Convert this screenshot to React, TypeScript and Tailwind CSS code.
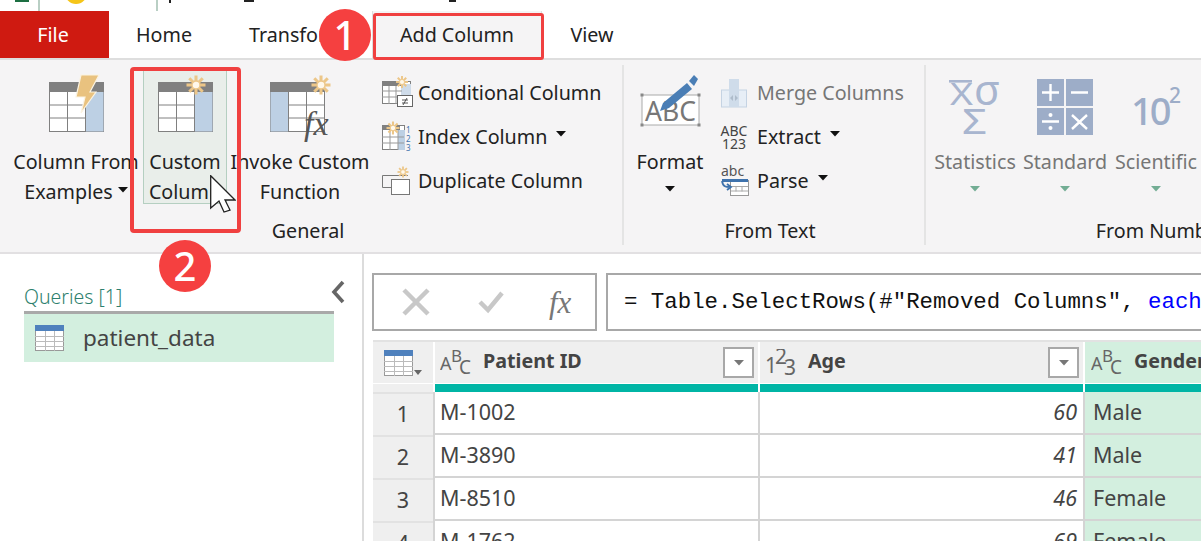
import React from "react";

const Star = ({ x, y, r = 10 }: { x: number; y: number; r?: number }) => (
  <g stroke="#ecc688" strokeWidth={r * 0.32} fill="none">
    {[0, 45, 90, 135].map((a) => {
      const d = (a * Math.PI) / 180;
      return <line key={a} x1={x - r * Math.cos(d)} y1={y - r * Math.sin(d)} x2={x + r * Math.cos(d)} y2={y + r * Math.sin(d)} />;
    })}
    <circle cx={x} cy={y} r={r * 0.42} fill="#fff8ea" stroke="#ecc688" strokeWidth={r * 0.14} />
  </g>
);

const BigTable = ({ blue }: { blue: "left" | "right" }) => (
  <g>
    <rect x="0.5" y="0.5" width="54" height="49" fill="#fff" stroke="#808080" />
    <rect x="0" y="0" width="55" height="10" fill="#808080" />
    {blue === "right" ? <rect x="37" y="10" width="17.5" height="39.5" fill="#bdd0e4" /> : <rect x="0.5" y="10" width="18" height="39.5" fill="#bdd0e4" />}
    <path d={blue === "right" ? "M18.5 10V50M36.5 10V50M0 23H37M0 36H37" : "M18.5 10V50M36.5 10V50M18 23H55M18 36H55"} stroke="#808080" fill="none" />
  </g>
);

const Caret = ({ color = "#111", className = "" }: { color?: string; className?: string }) => (
  <svg width="10" height="6" viewBox="0 0 10 6" className={className}>
    <path d="M0 0H10L5 5.5Z" fill={color} />
  </svg>
);

const IconExamples = () => (
  <svg width="55" height="50" viewBox="0 0 55 50" className="overflow-visible">
    <BigTable blue="right" />
    <path d="M32 -7H50L41 10H47L32 31L36 15H27Z" fill="#e9c27f" stroke="#fbf3e2" strokeWidth="1.2" />
  </svg>
);
const IconCustom = () => (
  <svg width="55" height="50" viewBox="0 0 55 50" className="overflow-visible">
    <BigTable blue="right" />
    <Star x={38} y={3} r={9.5} />
  </svg>
);
const IconInvoke = () => (
  <svg width="60" height="60" viewBox="0 0 60 60" className="overflow-visible">
    <BigTable blue="left" />
    <Star x={51} y={3} r={9.5} />
    <text x="34" y="53" fontFamily="'Liberation Serif', serif" fontStyle="italic" fontSize="34" fill="#555">fx</text>
  </svg>
);

const SmallConditional = () => (
  <svg width="32" height="30" viewBox="0 0 32 30" className="overflow-visible">
    <rect x="0.5" y="3.5" width="28" height="22" fill="#fff" stroke="#808080" />
    <rect x="0" y="3" width="20" height="5" fill="#808080" />
    <rect x="19" y="6" width="10" height="14" fill="#cfdcea" />
    <path d="M7 8V26M14 8V26M0 13H20M0 19H20" stroke="#999" />
    <Star x={20} y={4} r={6} />
    <rect x="15.5" y="17.5" width="15" height="11" fill="#fff" stroke="#666" />
    <path d="M20 22H26M20 25H26M25 20L21 27" stroke="#444" fill="none" strokeWidth="0.9" />
  </svg>
);
const SmallIndex = () => (
  <svg width="32" height="30" viewBox="0 0 32 30" className="overflow-visible">
    <rect x="0.5" y="3.5" width="22" height="24" fill="#fff" stroke="#808080" />
    <rect x="0" y="3" width="18" height="5" fill="#808080" />
    <rect x="16" y="8" width="7" height="20" fill="#bdd0e4" />
    <path d="M8 8V28M16 8V28M0 15H22M0 21H22" stroke="#999" />
    <Star x={11} y={6} r={6.5} />
    <text x="24" y="11" fontFamily="'Noto Sans', sans-serif" fontSize="8" fill="#3f73ad">1</text>
    <text x="24" y="20" fontFamily="'Noto Sans', sans-serif" fontSize="8" fill="#3f73ad">2</text>
    <text x="24" y="29" fontFamily="'Noto Sans', sans-serif" fontSize="8" fill="#3f73ad">3</text>
  </svg>
);
const SmallDuplicate = () => (
  <svg width="32" height="30" viewBox="0 0 32 30" className="overflow-visible">
    <path d="M9 21.5H0.5V9.5H26" fill="none" stroke="#777" />
    <rect x="9.5" y="13.5" width="18" height="15" fill="#fff" stroke="#777" />
    <Star x={21} y={6} r={5.5} />
  </svg>
);

const IconFormat = () => (
  <svg width="62" height="60" viewBox="0 0 62 60" className="overflow-visible">
    <rect x="3" y="20" width="57" height="30" fill="#fff" stroke="#aaa" />
    {[[3, 20], [60, 20], [3, 50], [60, 50]].map(([x, y]) => (
      <rect key={`${x}-${y}`} x={x - 1.5} y={y - 1.5} width="3" height="3" fill="#888" />
    ))}
    <text x="6" y="46" fontFamily="'Noto Sans', sans-serif" fontSize="27" textLength="51" lengthAdjust="spacingAndGlyphs" fill="#777">ABC</text>
    <path d="M21 36L24 28L48 8L53 14L30 33Z" fill="#4a7eb5" />
    <path d="M50 6L55 0L59 4L55 11Z" fill="#4a7eb5" />
  </svg>
);
const IconMerge = () => (
  <svg width="26" height="30" viewBox="0 0 26 30">
    <rect x="0.5" y="12" width="25" height="17" fill="#e7eef6" stroke="#c5d3e3" />
    <rect x="8" y="1" width="10" height="28" fill="#cfdcea" />
    <path d="M9 20L12 17V23ZM17 20L14 17V23Z" fill="#aebccb" />
  </svg>
);
const IconExtract = () => (
  <div className="flex w-[26px] flex-col items-center text-[14px] leading-[13px] text-[#444]">
    <span>ABC</span>
    <span>123</span>
  </div>
);
const IconParse = () => (
  <svg width="28" height="30" viewBox="0 0 28 30" className="overflow-visible">
    <text x="0" y="10" fontFamily="'Noto Sans', sans-serif" fontSize="14" fill="#555">abc</text>
    <rect x="9.5" y="14.5" width="18" height="15" fill="#fff" stroke="#999" />
    <rect x="1" y="13" width="26" height="3" fill="#3f73ad" />
    <path d="M15 20.5V25.5M21 20.5V25.5M10 20.5H27M10 25H27" stroke="#aaa" />
    <path d="M1 15C2 21 5 21 9 21M6 18L10 21L6 24" fill="none" stroke="#3f73ad" strokeWidth="1.8" />
  </svg>
);
const IconStats = () => (
  <svg width="78" height="64" viewBox="0 0 78 64" className="overflow-visible">
    <rect x="13" y="5" width="23" height="2.6" fill="#a8b5cf" />
    <text x="14" y="30" fontFamily="'Noto Sans', sans-serif" fontSize="31" textLength="23" lengthAdjust="spacingAndGlyphs" fill="#a8b5cf">X</text>
    <text x="38" y="30" fontFamily="'Noto Sans', sans-serif" fontSize="41" textLength="26" lengthAdjust="spacingAndGlyphs" fill="#a8b5cf">σ</text>
    <text x="26" y="59" fontFamily="'Noto Sans', sans-serif" fontSize="34" textLength="25" lengthAdjust="spacingAndGlyphs" fill="#a8b5cf">Σ</text>
  </svg>
);
const IconStandard = () => (
  <svg width="56" height="56" viewBox="0 0 56 56">
    <rect width="27" height="27" fill="#9dadc8" />
    <rect x="29" width="27" height="27" fill="#9dadc8" />
    <rect y="29" width="27" height="27" fill="#9dadc8" />
    <rect x="29" y="29" width="27" height="27" fill="#9dadc8" />
    <path d="M5 13.5H22M13.5 5V22M34 13.5H51M5 42.5H22M35 36L50 50M50 36L35 50" stroke="#fff" strokeWidth="2.4" />
    <circle cx="13.5" cy="36" r="2" fill="#fff" />
    <circle cx="13.5" cy="49" r="2" fill="#fff" />
  </svg>
);
const IconSci = () => (
  <svg width="50" height="50" viewBox="0 0 50 50" className="overflow-visible">
    <text x="0" y="46" fontFamily="'Noto Sans', sans-serif" fontSize="38" fontWeight="500" letterSpacing="-3" fill="#9dadc8">10</text>
    <text x="38" y="24" fontFamily="'Noto Sans', sans-serif" fontSize="21" fontWeight="500" fill="#9dadc8">2</text>
  </svg>
);

const LargeButton = ({ icon, lines, caret, width, className = "", gray = false, iconClass = "" }: { icon: React.ReactNode; lines: string[]; caret?: "inline" | "below"; width: string; className?: string; gray?: boolean; iconClass?: string }) => (
  <div className={`flex shrink-0 flex-col items-center ${width} ${className}`}>
    <div className={`flex h-[77px] shrink-0 items-start justify-center ${iconClass}`}>{icon}</div>
    {lines.map((l, i) => (
      <div key={l} className={`flex shrink-0 items-center whitespace-nowrap leading-[30px] ${gray ? "text-[#767676]" : ""}`}>
        {l}
        {caret === "inline" && i === lines.length - 1 && <Caret className="ml-[5px] -mt-[5px]" />}
      </div>
    ))}
    {caret === "below" && (
      <div className="flex h-[24px] items-center justify-center">
        <Caret color={gray ? "#73ad94" : "#111"} />
      </div>
    )}
  </div>
);

const SmallButton = ({ icon, label, caret, gray = false }: { icon: React.ReactNode; label: string; caret?: boolean; gray?: boolean }) => (
  <div className={`flex h-[44px] items-center whitespace-nowrap ${gray ? "text-[#767676]" : ""}`}>
    <div className="flex w-[36px] shrink-0 items-center">{icon}</div>
    {label}
    {caret && <Caret className="-mt-[6px] ml-[9px]" />}
  </div>
);

const Group = ({ label, width, children, labelClass = "" }: { label: string; width: string; children: React.ReactNode; labelClass?: string }) => (
  <div className={`flex h-full shrink-0 flex-col ${width}`}>
    <div className="flex h-[156px] pt-[10px]">{children}</div>
    <div className={`h-[30px] text-center leading-[30px] ${labelClass}`}>{label}</div>
  </div>
);

const Sep = () => <div className="mt-[5px] mb-[7px] w-[2px] shrink-0 bg-[#e4e4e4]" />;

const AbcIcon = () => (
  <svg width="32" height="28" viewBox="0 0 32 28" className="shrink-0">
    <text x="0" y="21" fontFamily="'Noto Sans', sans-serif" fontSize="18" fill="#666">A</text>
    <text x="11" y="13" fontFamily="'Noto Sans', sans-serif" fontSize="17" fill="#666">B</text>
    <text x="19" y="25" fontFamily="'Noto Sans', sans-serif" fontSize="19" fill="#666">C</text>
  </svg>
);
const NumIcon = () => (
  <svg width="32" height="28" viewBox="0 0 32 28" className="shrink-0">
    <text x="0" y="24" fontFamily="'Noto Sans', sans-serif" fontSize="21" fill="#666">1</text>
    <text x="10" y="15" fontFamily="'Noto Sans', sans-serif" fontSize="21" fill="#666">2</text>
    <text x="19" y="26" fontFamily="'Noto Sans', sans-serif" fontSize="21" fill="#666">3</text>
  </svg>
);
const Filter = () => (
  <div className="flex h-[31px] w-[31px] shrink-0 items-center justify-center border-2 border-[#a8a8a8] bg-white">
    <Caret color="#777" />
  </div>
);
const GridIcon = ({ small = false }: { small?: boolean }) => (
  <svg width={small ? 38 : 29} height="26" viewBox={small ? "0 0 38 26" : "0 0 29 26"} className="shrink-0">
    <rect x="0.5" y="0.5" width="28" height="25" fill="#fff" stroke="#999" />
    <rect x="0" y="0" width="29" height="6" fill="#4f81bd" />
    <path d="M10.5 6V26M19.5 6V26M0 11.5H29M0 16.5H29M0 21.5H29" stroke="#bbb" />
    {small && <path d="M30 20H38L34 25Z" fill="#666" />}
  </svg>
);

const rows = [
  ["1", "M-1002", "60", "Male"],
  ["2", "M-3890", "41", "Male"],
  ["3", "M-8510", "46", "Female"],
  ["4", "M-1762", "69", "Female"],
];

export default function App() {
  return (
    <div className="relative flex h-[541px] w-[1201px] flex-col overflow-hidden bg-white font-['Noto_Sans',sans-serif] text-[19.7px] text-[#222]">
      {/* title strip */}
      <div className="flex h-[11px] shrink-0 items-start overflow-hidden">
        <div className="ml-[15px] h-[2px] w-[14px] bg-[#1d6f42]" />
        <div className="ml-[9px] h-[11px] w-[2px] bg-[#b9cfc4]" />
        <div className="-mt-[18px] ml-[25px] h-[22px] w-[22px] shrink-0 rounded-full bg-[#f5c518]" />
        <div className="ml-[69px] h-[11px] w-[2px] bg-[#b9cfc4]" />
        <div className="ml-[11px] h-[3px] w-[2px] bg-[#222]" />
        <div className="ml-[73px] h-[2px] w-[10px] bg-[#222]" />
        <div className="ml-[195px] h-[2px] w-[7px] bg-[#222]" />
      </div>

      {/* tabs */}
      <div className="flex h-[49px] shrink-0 border-b-2 border-[#dedede]">
        <div className="flex h-[47px] w-[109px] items-center justify-center bg-[#cf1a11] pr-[3px] text-white">File</div>
        <div className="flex w-[110px] items-center justify-center pt-[1px]">Home</div>
        <div className="flex w-[153px] items-center pl-[30px] pt-[1px]">Transform</div>
        <div className="flex w-[170px] items-center justify-center border-x border-[#dedede] bg-[#f5f4f5] pt-[1px]">Add Column</div>
        <div className="flex w-[100px] items-center justify-center pt-[1px]">View</div>
      </div>

      {/* ribbon */}
      <div className="flex h-[194px] shrink-0 overflow-hidden border-b-2 border-[#e2e0e2] bg-[#f5f4f5]">
        <Group label="General" width="w-[622px]" labelClass="pr-[6px]">
          <LargeButton icon={<IconExamples />} lines={["Column From", "Examples"]} caret="inline" width="w-[126px]" className="ml-[13px]" iconClass="pt-[12px]" />
          <LargeButton
            icon={<IconCustom />}
            lines={["Custom", "Column"]}
            width="w-[84px]"
            className="mx-[4px] -mt-[2px] mb-[12px] border border-t-0 border-[#b5cfc1] bg-[#e9eeea] pt-[2px]"
            iconClass="pt-[12px]"
          />
          <LargeButton icon={<IconInvoke />} lines={["Invoke Custom", "Function"]} width="w-[138px]" iconClass="pt-[12px]" />
          <div className="ml-[13px] flex flex-col pt-[1px]">
            <SmallButton icon={<SmallConditional />} label="Conditional Column" />
            <SmallButton icon={<SmallIndex />} label="Index Column" caret />
            <SmallButton icon={<SmallDuplicate />} label="Duplicate Column" />
          </div>
        </Group>
        <Sep />
        <Group label="From Text" width="w-[300px]" labelClass="pr-[8px]">
          <LargeButton icon={<IconFormat />} lines={["Format"]} caret="below" width="w-[90px]" className="ml-[1px]" iconClass="pt-[5px]" />
          <div className="ml-[6px] flex flex-col pt-[1px]">
            <SmallButton icon={<IconMerge />} label="Merge Columns" gray />
            <SmallButton icon={<IconExtract />} label="Extract" caret />
            <SmallButton icon={<IconParse />} label="Parse" caret />
          </div>
        </Group>
        <Sep />
        <Group label="From Number" width="w-[470px]">
          <LargeButton icon={<IconStats />} lines={["Statistics"]} caret="below" width="w-[90px]" className="ml-[4px]" iconClass="pt-[5px]" gray />
          <LargeButton icon={<IconStandard />} lines={["Standard"]} caret="below" width="w-[90px]" iconClass="pt-[9px]" gray />
          <LargeButton icon={<IconSci />} lines={["Scientific"]} caret="below" width="w-[92px]" iconClass="pt-[9px]" gray />
        </Group>
      </div>

      {/* body */}
      <div className="flex min-h-0 flex-1">
        {/* queries */}
        <div className="relative w-[364px] shrink-0 border-r-2 border-[#dcdcdc] pl-[24px] pt-[28px]">
          <div className="flex h-[29px] w-[310px] items-center text-[19.5px] font-light text-[#2e7f6e]">Queries [1]</div>
          <div className="flex h-[51px] w-[310px] items-center gap-[19px] border-t-[3px] border-[#a9a9a9] bg-[#d3efdf] pl-[11px] text-[#444]">
            <GridIcon />
            <span className="text-[22.5px]">patient_data</span>
          </div>
          <svg width="14" height="24" viewBox="0 0 14 24" className="absolute left-[331px] top-[26px]">
            <path d="M12 2L3 12L12 22" fill="none" stroke="#666" strokeWidth="3.6" />
          </svg>
        </div>

        {/* main */}
        <div className="min-w-0 flex-1 pl-[8px] pt-[19px]">
          <div className="flex h-[58px] gap-[9px]">
            <div className="flex w-[225px] shrink-0 items-center border-2 border-[#a8a8a8] bg-white">
              <svg width="32" height="32" viewBox="0 0 32 32" className="ml-[26px]">
                <path d="M4 4L28 28M28 4L4 28" stroke="#c8c8c8" strokeWidth="4.5" />
              </svg>
              <svg width="28" height="24" viewBox="0 0 28 24" className="ml-[45px]">
                <path d="M3 12L11 20L25 3" fill="none" stroke="#c8c8c8" strokeWidth="4.5" />
              </svg>
              <span className="ml-[44px] font-['Liberation_Serif',serif] text-[31px] italic leading-none text-[#777]">fx</span>
            </div>
            <div className="flex min-w-0 flex-1 items-center overflow-hidden whitespace-nowrap border-y-2 border-l-2 border-[#a8a8a8] pl-[16px] pt-[2px] font-['Liberation_Mono',monospace] text-[22.4px] text-[#111]">
              <span className="whitespace-pre">
                = Table.SelectRows(#"Removed Columns", <span className="text-[#0000ff]">each</span>
              </span>
            </div>
          </div>

          <div className="mt-[9px] ml-px flex flex-col border-t-2 border-[#e2e2e2]">
            <div className="flex h-[41px]">
              <div className="flex w-[60px] shrink-0 items-center justify-center bg-[#efefef]">
                <GridIcon small />
              </div>
              <div className="ml-[2px] flex w-[323px] shrink-0 items-center gap-[11px] bg-[#efefef] pl-[5px] pr-[4px]">
                <AbcIcon />
                <span className="flex-1 pb-[3px] font-bold text-[#444]">Patient ID</span>
                <Filter />
              </div>
              <div className="ml-[2px] flex w-[323px] shrink-0 items-center gap-[11px] bg-[#efefef] pl-[5px] pr-[4px]">
                <NumIcon />
                <span className="flex-1 pb-[3px] font-bold text-[#444]">Age</span>
                <Filter />
              </div>
              <div className="ml-[2px] flex min-w-0 flex-1 items-center gap-[11px] overflow-hidden bg-[#d3efdf] pl-[6px]">
                <AbcIcon />
                <span className="pb-[3px] font-bold text-[#444]">Gender</span>
              </div>
            </div>
            <div className="mt-[1px] flex h-[8px]">
              <div className="w-[60px] shrink-0 bg-[#efefef]" />
              <div className="ml-[2px] w-[323px] shrink-0 bg-[#00b5a5]" />
              <div className="ml-[2px] w-[323px] shrink-0 bg-[#00b5a5]" />
              <div className="ml-[2px] flex-1 bg-[#00b5a5]" />
            </div>
            {rows.map(([n, id, age, gender]) => (
              <div key={n} className="flex h-[43px] shrink-0 text-[21.5px] text-[#444]">
                <div className="flex w-[60px] shrink-0 items-center justify-center border-t-2 border-[#e2e2e2] bg-[#efefef]">{n}</div>
                <div className="flex w-[325px] shrink-0 items-center border-l-2 border-b-2 border-[#d4d4d4] pl-[5px]">{id}</div>
                <div className="flex w-[325px] shrink-0 items-center justify-end border-l-2 border-b-2 border-[#d4d4d4] pr-[6px] italic">{age}</div>
                <div className="flex flex-1 items-center border-l-2 border-b-2 border-[#d4d4d4] bg-[#d3efdf] pl-[8px]">{gender}</div>
              </div>
            ))}
          </div>
        </div>
      </div>

      {/* annotations */}
      <div className="absolute left-[373px] top-[13px] h-[47px] w-[171px] rounded-[3px] border-[3px] border-[#f04040]" />
      <div className="absolute left-[130px] top-[67px] h-[166px] w-[111px] rounded-[4px] border-[4px] border-[#f04040]" />
      <div className="absolute left-[319px] top-[9px] flex h-[52px] w-[52px] items-center justify-center rounded-full bg-[#f54040] text-[40px] font-medium text-white">1</div>
      <div className="absolute left-[159px] top-[240px] flex h-[52px] w-[52px] items-center justify-center rounded-full bg-[#f54040] text-[40px] font-medium text-white">2</div>
      <svg width="26" height="40" viewBox="0 0 26 40" className="absolute left-[210px] top-[175px]">
        <path d="M0.7 0.7V33L9 26L14 37L20 35L15 25H25Z" fill="#fff" stroke="#222" strokeWidth="1.3" />
      </svg>
    </div>
  );
}
